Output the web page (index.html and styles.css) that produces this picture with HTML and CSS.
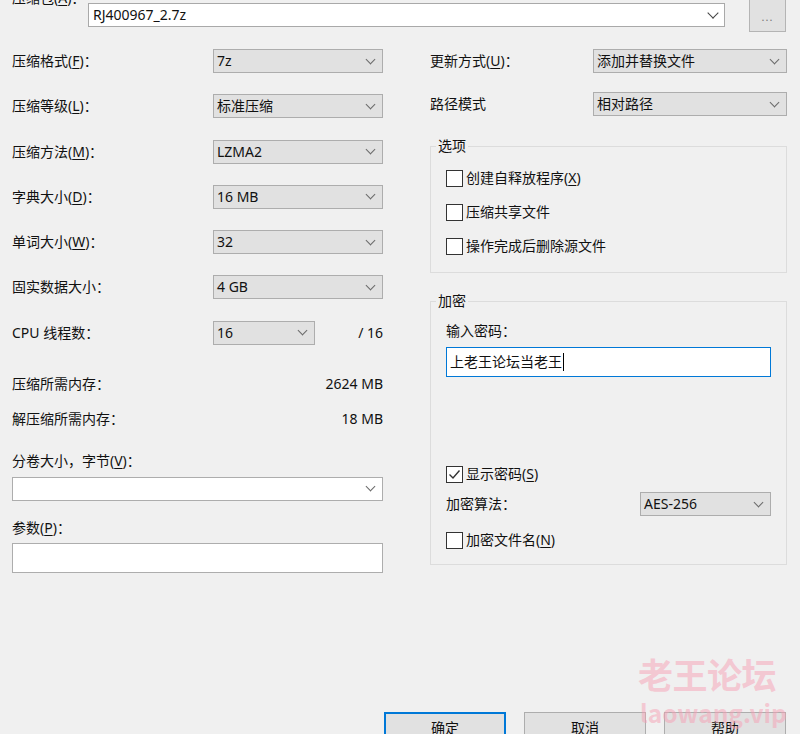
FILE: index.html
```html
<!DOCTYPE html>
<html lang="zh-CN">
<head>
<meta charset="utf-8">
<title>添加到压缩包</title>
<link rel="stylesheet" href="styles.css">
</head>
<body>
<div class="dialog">
  <div class="top">
    <div class="archive-label">压缩包(<u>A</u>)：</div>
    <div class="combo archive"><span>RJ400967_2.7z</span><span class="chev dark"></span></div>
    <div class="browse">...</div>
  </div>

  <div class="main">
    <div class="left">
      <div class="rows">
        <div class="row"><span class="lbl">压缩格式(<u>F</u>)：</span><div class="select w170"><span>7z</span><span class="chev"></span></div></div>
        <div class="row"><span class="lbl">压缩等级(<u>L</u>)：</span><div class="select w170"><span>标准压缩</span><span class="chev"></span></div></div>
        <div class="row"><span class="lbl">压缩方法(<u>M</u>)：</span><div class="select w170"><span>LZMA2</span><span class="chev"></span></div></div>
        <div class="row"><span class="lbl">字典大小(<u>D</u>)：</span><div class="select w170"><span>16 MB</span><span class="chev"></span></div></div>
        <div class="row"><span class="lbl">单词大小(<u>W</u>)：</span><div class="select w170"><span>32</span><span class="chev"></span></div></div>
        <div class="row"><span class="lbl">固实数据大小：</span><div class="select w170"><span>4 GB</span><span class="chev"></span></div></div>
        <div class="row"><span class="lbl">CPU 线程数：</span><div class="select w102"><span>16</span><span class="chev"></span></div><span class="value">/ 16</span></div>
      </div>
      <div class="mem first"><span>压缩所需内存：</span><span>2624 MB</span></div>
      <div class="mem second"><span>解压缩所需内存：</span><span>18 MB</span></div>
      <div class="field-label vol">分卷大小，字节(<u>V</u>)：</div>
      <div class="combo volume"><span></span><span class="chev"></span></div>
      <div class="field-label params">参数(<u>P</u>)：</div>
      <div class="textbox"></div>
    </div>

    <div class="right">
      <div class="row"><span class="lbl r">更新方式(<u>U</u>)：</span><div class="select w194"><span>添加并替换文件</span><span class="chev"></span></div></div>
      <div class="row second-row"><span class="lbl r">路径模式</span><div class="select w194"><span>相对路径</span><span class="chev"></span></div></div>

      <fieldset class="group options">
        <legend>选项</legend>
        <div class="check"><span class="box"></span><span>创建自释放程序(<u>X</u>)</span></div>
        <div class="check"><span class="box"></span><span>压缩共享文件</span></div>
        <div class="check"><span class="box"></span><span>操作完成后删除源文件</span></div>
      </fieldset>

      <fieldset class="group encrypt">
        <legend>加密</legend>
        <div class="pw-label">输入密码：</div>
        <div class="password"><span>上老王论坛当老王</span><span class="caret"></span></div>
        <div class="check show"><span class="box"><svg width="15" height="15" viewBox="0 0 15 15"><path d="M2.5 7.5 L6 11 L12.5 3.5" fill="none" stroke="#333" stroke-width="1.4"/></svg></span><span>显示密码(<u>S</u>)</span></div>
        <div class="row algo"><span class="lbl a">加密算法：</span><div class="select w132"><span>AES-256</span><span class="chev"></span></div></div>
        <div class="check names"><span class="box"></span><span>加密文件名(<u>N</u>)</span></div>
      </fieldset>
    </div>
  </div>

  <div class="buttons">
    <div class="btn default">确定</div>
    <div class="btn">取消</div>
    <div class="btn">帮助</div>
  </div>

  <div class="watermark">
    <div class="wm-cn">老王论坛</div>
    <div class="wm-en">laowang.vip</div>
  </div>
</div>
</body>
</html>
```

FILE: styles.css
```css
html, body {
  margin: 0;
  padding: 0;
}

body {
  background: #f0f0f0;
  width: 800px;
  height: 734px;
  overflow: hidden;
  font-family: "Noto Sans", "Noto Sans CJK SC", sans-serif;
  font-size: 14px;
  line-height: 20px;
  color: #111;
}

.dialog {
  position: relative;
  height: 734px;
}

u {
  text-decoration: underline;
  text-underline-offset: 2px;
}

/* top row */
.top {
  display: flex;
  align-items: flex-start;
  height: 33px;
  margin-top: -1px;
  padding-left: 12px;
}

.archive-label {
  width: 76px;
  margin-top: -11px;
}

.combo {
  box-sizing: border-box;
  display: flex;
  align-items: center;
  justify-content: space-between;
  background: #fff;
  border: 1px solid #a9a9a9;
  padding: 0 7px 0 4px;
}

.combo.archive {
  width: 637px;
  height: 24px;
  margin-top: 4px;
}

.browse {
  box-sizing: border-box;
  width: 37px;
  height: 33px;
  margin-left: 24px;
  background: #e1e1e1;
  border: 1px solid #b4b4b4;
  display: flex;
  align-items: center;
  justify-content: center;
  color: #777;
  font-size: 11px;
  letter-spacing: 1px;
  padding-top: 2px;
}

/* chevrons */
.chev {
  width: 6px;
  height: 6px;
  border-style: solid;
  border-color: #6a6a6a;
  border-width: 0 1px 1px 0;
  transform: translateY(-2px) rotate(45deg);
  flex: none;
}

.chev.dark {
  width: 7px;
  height: 7px;
  border-color: #444;
  border-width: 0 1.4px 1.4px 0;
}

/* main columns */
.main {
  display: flex;
  gap: 47px;
  padding-left: 12px;
  margin-top: 17px;
}

.left {
  width: 371px;
  display: flex;
  flex-direction: column;
}

.right {
  width: 357px;
  display: flex;
  flex-direction: column;
}

.rows {
  display: flex;
  flex-direction: column;
  gap: 21.3px;
}

.row {
  display: flex;
  align-items: center;
  height: 24px;
}

.lbl {
  width: 201px;
  flex: none;
}

.lbl.r {
  width: 163px;
}

.lbl.a {
  width: 194px;
}

.select {
  box-sizing: border-box;
  height: 24px;
  display: flex;
  align-items: center;
  justify-content: space-between;
  background: #e1e1e1;
  border: 1px solid #adadad;
  padding: 0 8px 0 3px;
}

.w170 { width: 170px; }
.w102 { width: 102px; }
.w194 { width: 194px; }
.w132 { width: 132px; }

.value {
  flex: 1;
  text-align: right;
}

.mem {
  display: flex;
  justify-content: space-between;
  height: 20px;
}

.mem.first { margin-top: 29px; }
.mem.second { margin-top: 15px; }

.field-label { height: 20px; }
.field-label.vol { margin-top: 22px; }
.field-label.params { margin-top: 17px; }

.combo.volume {
  height: 24px;
  margin-top: 6px;
  border-color: #adadad;
  padding-right: 8px;
}

.textbox {
  box-sizing: border-box;
  height: 30px;
  margin-top: 5px;
  background: #fff;
  border: 1px solid #adadad;
}

/* right column */
.second-row {
  margin-top: 19px;
}

.group {
  margin: 0;
  border: 1px solid #dcdcdc;
  padding: 0 15px;
  min-width: 0;
}

.group legend {
  padding: 0 2px;
  margin-left: -10px;
  line-height: 20px;
}

.options {
  margin-top: 20px;
  padding-top: 12px;
  padding-bottom: 16px;
  display: flex;
  flex-direction: column;
  gap: 14px;
}

.check {
  display: flex;
  align-items: center;
  height: 20px;
  gap: 3px;
}

.box {
  box-sizing: border-box;
  width: 17px;
  height: 17px;
  border: 1px solid #333;
  background: #fff;
  display: flex;
  align-items: center;
  justify-content: center;
  flex: none;
}

.encrypt {
  margin-top: 18px;
  padding-top: 10px;
  padding-bottom: 14px;
}

.pw-label {
  height: 20px;
}

.password {
  box-sizing: border-box;
  height: 30px;
  margin-top: 6px;
  background: #fff;
  border: 1px solid #0078d7;
  display: flex;
  align-items: center;
  padding-left: 3px;
}

.caret {
  width: 0;
  height: 18px;
  border-left: 1px solid #000;
  margin-left: 1px;
}

.check.show { margin-top: 87px; }
.row.algo { margin-top: 8px; }
.check.names { margin-top: 14px; }

/* buttons */
.buttons {
  display: flex;
  justify-content: flex-end;
  gap: 18px;
  padding-right: 14px;
  margin-top: 139px;
}

.btn {
  box-sizing: border-box;
  width: 122px;
  height: 30px;
  background: #e1e1e1;
  border: 1px solid #adadad;
  text-align: center;
  line-height: 30px;
}

.btn.default {
  border: 2px solid #0078d7;
  line-height: 28px;
}

/* watermark overlay */
.watermark {
  position: absolute;
  left: 638px;
  top: 652px;
  color: rgba(246, 160, 180, 0.5);
  font-family: "Noto Sans CJK SC", sans-serif;
  font-weight: 700;
  pointer-events: none;
}

.wm-cn {
  font-size: 35px;
  line-height: 46px;
  letter-spacing: -0.5px;
}

.wm-en {
  font-size: 24.5px;
  line-height: 30px;
  margin-top: 1px;
  padding-left: 2px;
}
```
